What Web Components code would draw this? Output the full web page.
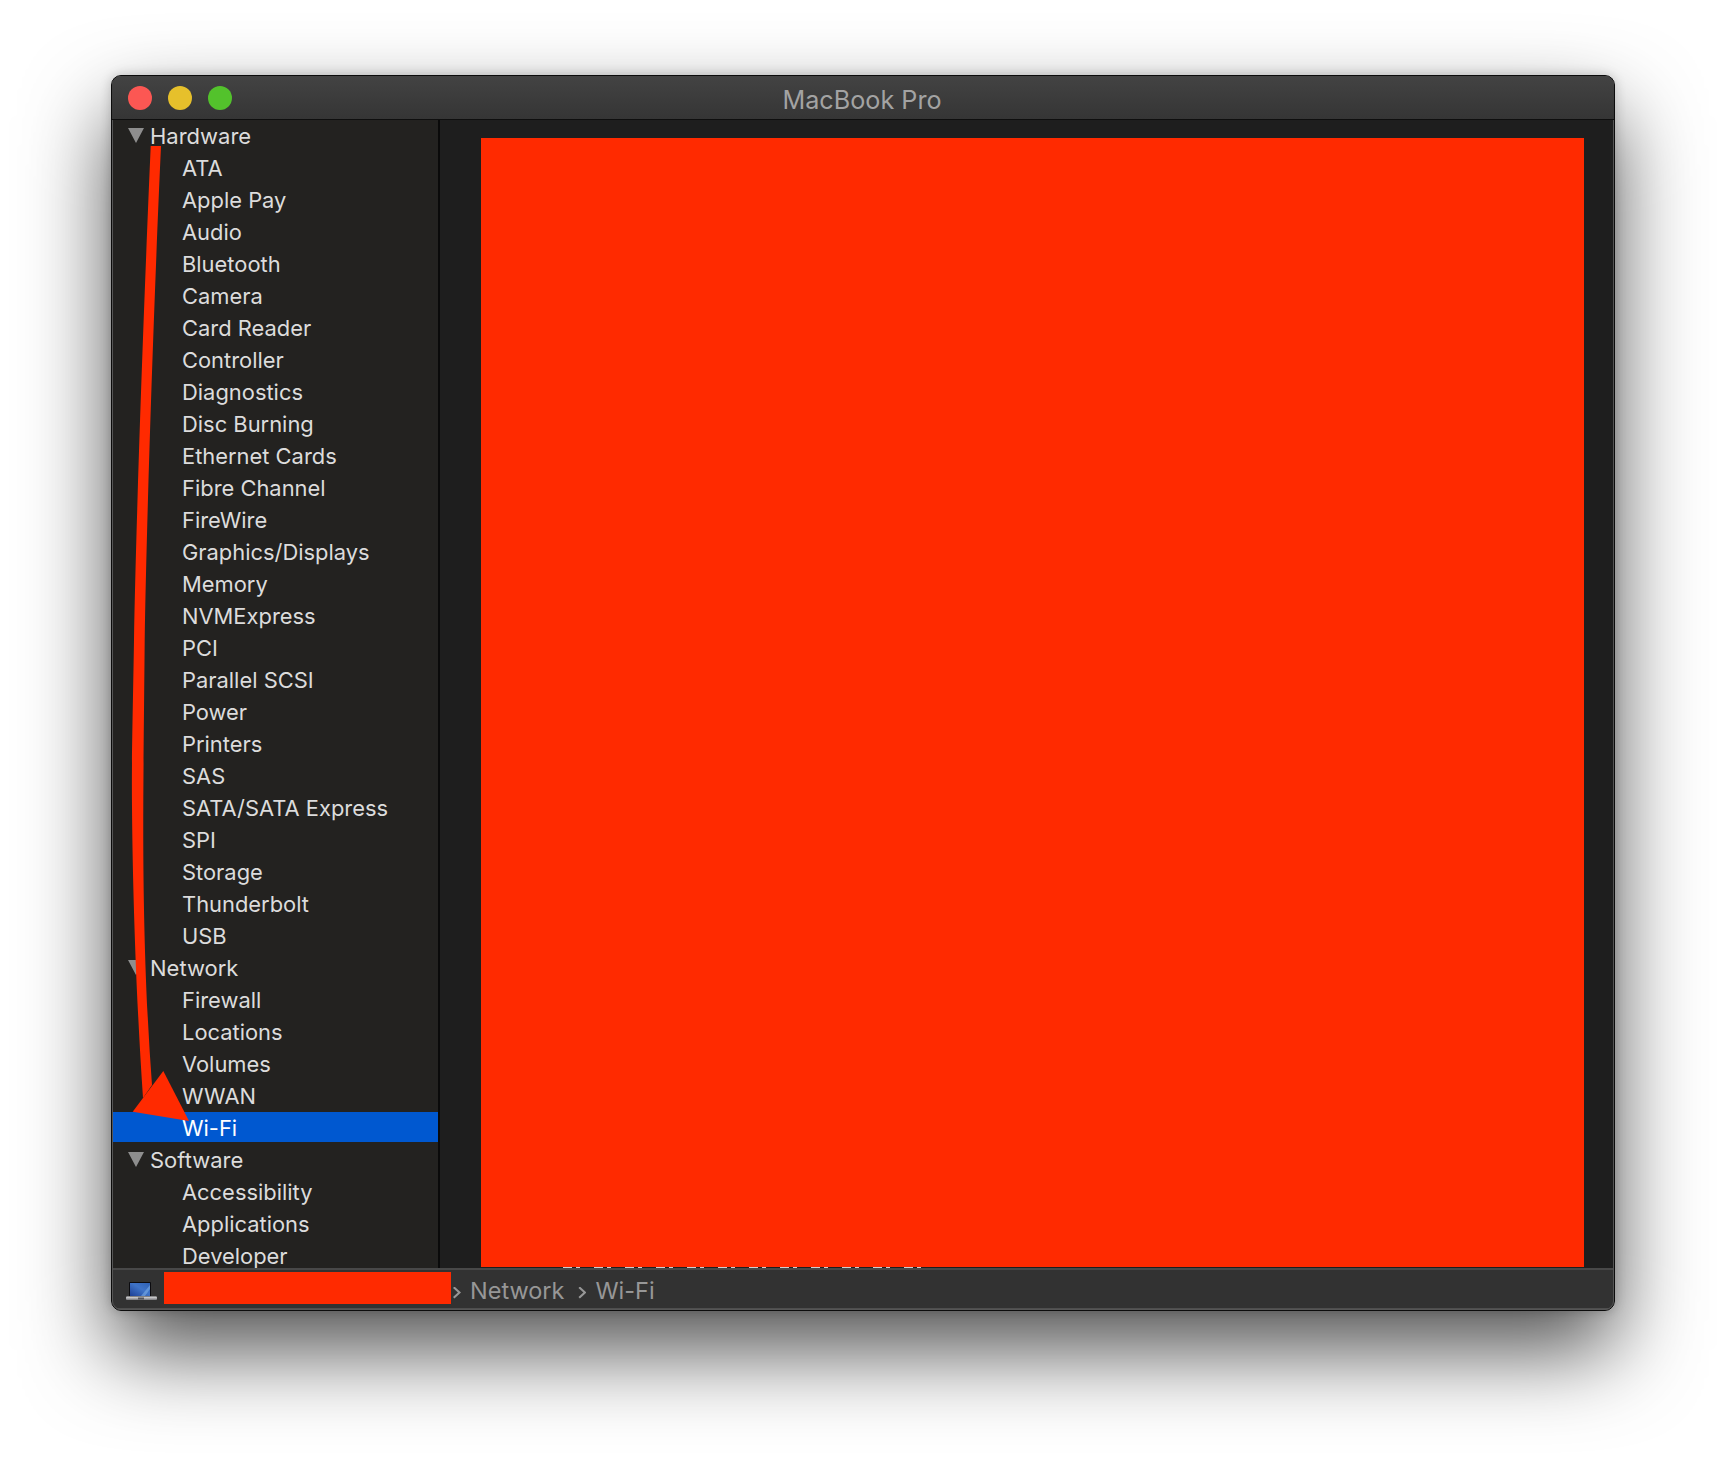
<!DOCTYPE html>
<html>
<head>
<meta charset="utf-8">
<title>MacBook Pro</title>
<style>
  html, body { margin: 0; padding: 0; background: #fff; }
  body { width: 1726px; height: 1458px; overflow: hidden; padding: 75px 0 0 111px; box-sizing: border-box; font-family: Inter, "Liberation Sans", sans-serif; }
</style>
</head>
<body>
<si-window heading="MacBook Pro">
  <si-tree slot="sidebar">
    <si-group label="Hardware">
      <si-item>ATA</si-item><si-item>Apple Pay</si-item><si-item>Audio</si-item><si-item>Bluetooth</si-item>
      <si-item>Camera</si-item><si-item>Card Reader</si-item><si-item>Controller</si-item><si-item>Diagnostics</si-item>
      <si-item>Disc Burning</si-item><si-item>Ethernet Cards</si-item><si-item>Fibre Channel</si-item><si-item>FireWire</si-item>
      <si-item>Graphics/Displays</si-item><si-item>Memory</si-item><si-item>NVMExpress</si-item><si-item>PCI</si-item>
      <si-item>Parallel SCSI</si-item><si-item>Power</si-item><si-item>Printers</si-item><si-item>SAS</si-item>
      <si-item>SATA/SATA Express</si-item><si-item>SPI</si-item><si-item>Storage</si-item><si-item>Thunderbolt</si-item><si-item>USB</si-item>
    </si-group>
    <si-group label="Network">
      <si-item>Firewall</si-item><si-item>Locations</si-item><si-item>Volumes</si-item><si-item>WWAN</si-item><si-item selected>Wi-Fi</si-item>
    </si-group>
    <si-group label="Software">
      <si-item>Accessibility</si-item><si-item>Applications</si-item><si-item>Developer</si-item>
    </si-group>
  </si-tree>
  <si-path slot="status">
    <span>Network</span><span>Wi-Fi</span>
  </si-path>
</si-window>
<script>
const windowTemplate = document.createElement('template')
windowTemplate.innerHTML = `
  <style>
    :host { display: block; position: relative; width: 1504px; height: 1236px; }
    .frame {
      position: relative; box-sizing: border-box; width: 100%; height: 100%; border: 1px solid #0c0c0c; outline: 1px solid #555; outline-offset: -2px;
      border-radius: 10px; overflow: hidden; display: flex; flex-direction: column; background: #1e1e1e;
    }
    .shadow { position: absolute; inset: 0; border-radius: 10px; box-shadow: 0 40px 85px rgba(0,0,0,.68), 0 0 12px rgba(0,0,0,.2); }
    .title {
      flex: none; height: 43px; position: relative; display: flex; align-items: center; gap: 16px; padding-left: 16px;
      background: linear-gradient(#434343, #353535); border-bottom: 1px solid #0e0e0e;
    }
    .dot { width: 24px; height: 24px; border-radius: 50%; }
    h1 { position: absolute; left: 0; right: 2px; top: 9px; margin: 0; text-align: center; font: 400 25.2px Inter, "Liberation Sans", sans-serif; color: #a3a3a3; }
    .body { flex: 1; min-height: 0; display: flex; }
    .side { flex: none; width: 326px; background: #232220; border-right: 2px solid #0a0a0a; overflow: hidden; }
    .detail { flex: 1; display: flex; flex-direction: column; padding: 18px 30px 0 41px; background: #1e1e1e; min-width: 0; }
    .redact { flex: 1; background: #ff2a00; }
    .sliver { flex: none; height: 1px; width: 360px; margin-left: 82px; background: repeating-linear-gradient(90deg, #cfcfcf 0 9px, transparent 9px 13px, #cfcfcf 13px 17px, transparent 17px 31px); }
    .status {
      flex: none; height: 42px; box-sizing: border-box; display: flex; align-items: center;
      background: #323232; border-top: 2px solid #484848; border-bottom: 2px solid #4e4e4e; padding-left: 14px;
    }
    .status svg { flex: none; width: 31px; height: 19px; margin-top: 4px; }
    .block { flex: none; width: 287px; height: 32px; margin: 0 0 2px 7px; background: #ff2a00; }
    .arrow { position: absolute; left: 0; top: 0; pointer-events: none; }
  </style>
  <div class="shadow"></div>
  <div class="frame">
    <div class="title">
      <div class="dot" style="background:#fc5753"></div>
      <div class="dot" style="background:#e6c02b"></div>
      <div class="dot" style="background:#53c22c"></div>
      <h1></h1>
    </div>
    <div class="body">
      <div class="side"><slot name="sidebar"></slot></div>
      <div class="detail"><div class="redact"></div><div class="sliver"></div></div>
    </div>
    <div class="status">
      <svg viewBox="0 0 31 19">
        <defs>
          <linearGradient id="scr" x1="0" y1="1" x2="1" y2="0"><stop offset="0" stop-color="#1c3f95"/><stop offset=".55" stop-color="#3f74c8"/><stop offset="1" stop-color="#2f62b5"/></linearGradient>
          <linearGradient id="base" x1="0" y1="0" x2="0" y2="1"><stop offset="0" stop-color="#e4e4e6"/><stop offset="1" stop-color="#77777b"/></linearGradient>
        </defs>
        <rect x="3" y="0" width="22" height="14.5" rx="1" fill="#0b0b0f"/>
        <rect x="4" y="1" width="20" height="13" fill="url(#scr)"/>
        <path d="M15 14 L24 3 V7 L19 14 Z" fill="#82b2ea" opacity=".55"/>
        <rect x="0" y="14.5" width="31" height="3.5" rx="1" fill="url(#base)"/>
        <rect x="12" y="15.5" width="6" height="2" fill="#55555a"/>
      </svg>
      <div class="block"></div>
      <slot name="status"></slot>
    </div>
  </div>
  <svg class="arrow" width="1504" height="1236" viewBox="0 0 1504 1236"></svg>
`
customElements.define('si-window',
  /**
   * The System Information window.
   */
  class extends HTMLElement {
    constructor () {
      super()
      this.attachShadow({ mode: 'open' })
        .appendChild(windowTemplate.content.cloneNode(true))
      this.shadowRoot.querySelector('h1').textContent = this.getAttribute('heading')
      // coordinates are page pixels minus the window origin
      const arrow = this.shadowRoot.querySelector('.arrow')
      arrow.innerHTML = `<g transform="translate(-111 -75)">
        <path fill="#ff2a00" d="M150.7 146 C144 300 136 520 134 640 C132.7 720 131.5 760 132 807 C132.5 870 135 980 143 1098 L152 1085 C144 980 143 870 143.3 807 C143.5 760 144 720 144.7 640 C146.5 520 154 300 161 146 Z"/>
        <polygon fill="#ff2a00" points="163.3,1071 189,1121 132.7,1111.7"/>
      </g>`
    }
  }
)

const treeTemplate = document.createElement('template')
treeTemplate.innerHTML = `
  <style>
    :host { display: block; height: 100%; overflow: hidden; }
  </style>
  <slot></slot>
`
customElements.define('si-tree',
  class extends HTMLElement {
    constructor () {
      super()
      this.attachShadow({ mode: 'open' })
        .appendChild(treeTemplate.content.cloneNode(true))
    }
  }
)

const groupTemplate = document.createElement('template')
groupTemplate.innerHTML = `
  <style>
    :host { display: block; }
    .head { height: 32px; display: flex; align-items: center; color: #dcdcdc; font-size: 22px; }
    .tri { flex: none; width: 0; height: 0; margin: 0 6px 1px 16px; border-left: 8.5px solid transparent; border-right: 8.5px solid transparent; border-top: 15px solid #8e8e8e; }
  </style>
  <div class="head"><span class="tri"></span><span class="label"></span></div>
  <slot></slot>
`
customElements.define('si-group',
  class extends HTMLElement {
    constructor () {
      super()
      this.attachShadow({ mode: 'open' })
        .appendChild(groupTemplate.content.cloneNode(true))
      this.shadowRoot.querySelector('.label').textContent = this.getAttribute('label')
    }
  }
)

const itemTemplate = document.createElement('template')
itemTemplate.innerHTML = `
  <style>
    :host { display: block; height: 32px; box-sizing: border-box; padding-left: 70px; line-height: 32px; color: #dcdcdc; font-size: 21.9px; white-space: nowrap; }
    :host([selected]) { background: linear-gradient(#0058d0 30px, transparent 30px); color: #fff; }
  </style>
  <slot></slot>
`
customElements.define('si-item',
  class extends HTMLElement {
    constructor () {
      super()
      this.attachShadow({ mode: 'open' })
        .appendChild(itemTemplate.content.cloneNode(true))
    }
  }
)

const pathTemplate = document.createElement('template')
pathTemplate.innerHTML = `
  <style>
    :host { display: flex; align-items: center; margin-top: 2px; color: #979797; font-size: 23.5px; white-space: nowrap; }
    ::slotted(span) { margin-left: 2px; margin-right: 12px; }
    ::slotted(span)::before {
      content: ""; display: inline-block; width: 8px; height: 12px; margin-right: 9px; background: #979797;
      clip-path: polygon(0 12%, 18% 0, 100% 50%, 18% 100%, 0 88%, 62% 50%);
    }
  </style>
  <slot></slot>
`
customElements.define('si-path',
  class extends HTMLElement {
    constructor () {
      super()
      this.attachShadow({ mode: 'open' })
        .appendChild(pathTemplate.content.cloneNode(true))
    }
  }
)
</script>
</body>
</html>
